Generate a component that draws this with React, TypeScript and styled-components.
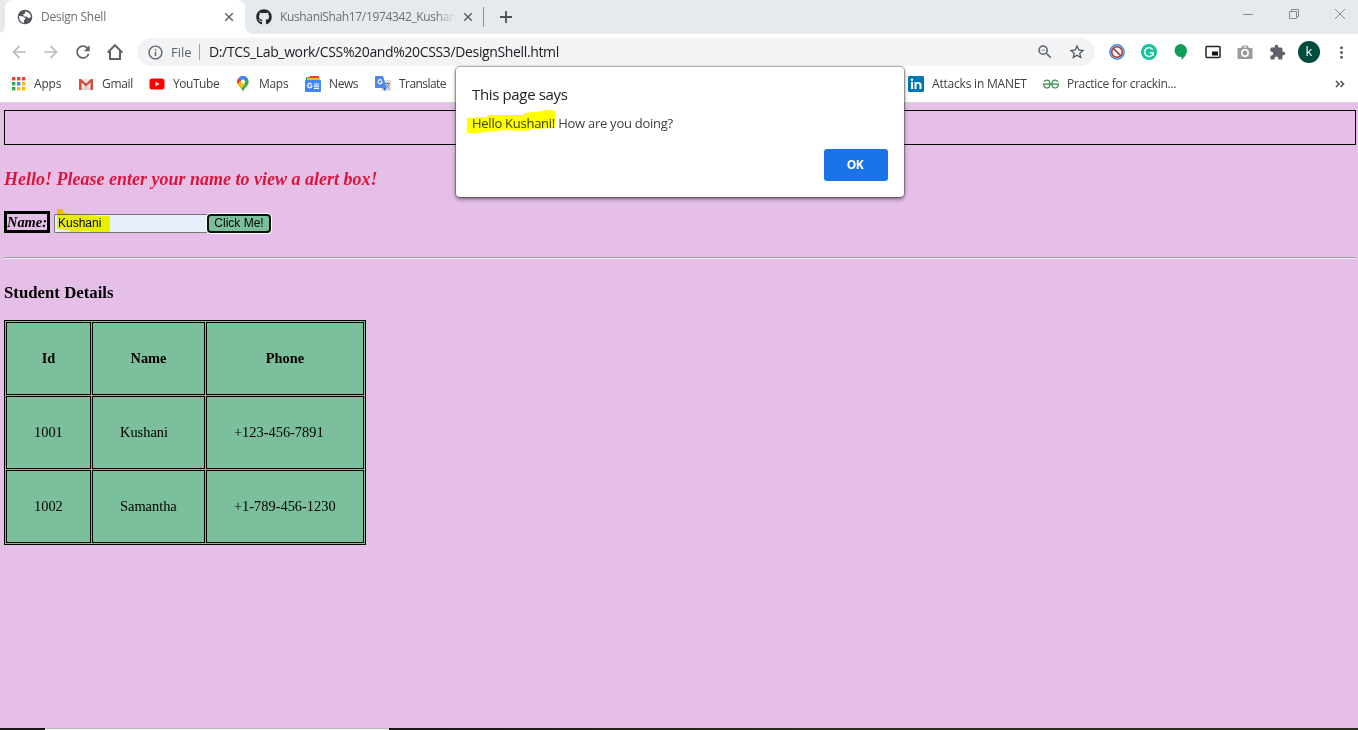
import React from 'react';
import styled, { createGlobalStyle } from 'styled-components';
import {
  MdArrowBack, MdArrowForward, MdRefresh, MdInfoOutline, MdStarBorder,
  MdExtension, MdMoreVert, MdOutlineZoomOut,
} from 'react-icons/md';
import { FaGithub } from 'react-icons/fa';

const Global = createGlobalStyle`
  * { box-sizing: border-box; }
  body { margin: 0; overflow: hidden; font-family: "Open Sans", "Noto Sans", sans-serif; }
  svg { display: block; flex: none; }
`;

const Window = styled.div`
  position: relative;
  display: flex;
  flex-direction: column;
  width: 1358px;
  height: 730px;
  overflow: hidden;
  background: #fff;
`;

const Label = styled.span<{ $ls?: number; $size?: number; $color?: string }>`
  display: block;
  font-size: ${p => p.$size ?? 12}px;
  letter-spacing: ${p => p.$ls ?? 0}px;
  color: ${p => p.$color ?? '#3c4043'};
  white-space: pre;
  line-height: 20px;
`;

const TabStrip = styled.div`
  display: flex;
  height: 34px;
  flex: none;
  padding-left: 5px;
  background: #e6eaed;
`;

const ActiveTab = styled.div`
  position: relative;
  display: flex;
  align-items: center;
  width: 240px;
  height: 34px;
  padding: 0 11px 0 12px;
  background: #fff;
  border-radius: 8px 8px 0 0;
  &::before, &::after {
    content: '';
    position: absolute;
    bottom: 0;
    width: 8px;
    height: 8px;
  }
  &::before { left: -8px; background: radial-gradient(circle at 0 0, transparent 7.5px, #fff 8px); }
  &::after { right: -8px; background: radial-gradient(circle at 100% 0, transparent 7.5px, #fff 8px); }
`;

const Tab = styled.div`
  display: flex;
  align-items: center;
  width: 238px;
  padding: 0 10px 0 11px;
`;

const TabTitle = styled.div<{ $fade?: boolean }>`
  flex: 1;
  margin: 0 7px 0 8px;
  min-width: 0;
  ${p => p.$fade && 'mask-image: linear-gradient(90deg, #000 88%, transparent);'}
`;

const Divider = styled.div<{ $h: number; $color: string }>`
  width: 1px;
  height: ${p => p.$h}px;
  align-self: center;
  background: ${p => p.$color};
`;

const NewTab = styled.div`
  display: flex;
  align-items: center;
  margin-left: 16px;
`;

const WindowControls = styled.div`
  display: flex;
  align-items: center;
  gap: 34px;
  height: 28px;
  margin-left: auto;
  padding-right: 12px;
`;

const Toolbar = styled.div`
  display: flex;
  align-items: center;
  flex: none;
  height: 36px;
  padding-right: 1px;
`;

const Slot = styled.div`
  display: flex;
  align-items: center;
  justify-content: center;
  width: 32px;
  height: 32px;
  flex: none;
`;

const NavButtons = styled.div`
  display: flex;
  width: 137px;
  padding-left: 3px;
`;

const Omnibox = styled.div`
  display: flex;
  align-items: center;
  width: 958px;
  height: 28px;
  padding-left: 10px;
  border-radius: 14px;
  background: #f1f3f4;
`;

const Scheme = styled.div`
  width: 28px;
  margin-left: 7px;
`;

const Address = styled.div`
  flex: 1;
  margin-left: 9px;
`;

const OmniIcons = styled.div`
  display: flex;
  padding-right: 2px;
`;

const Extensions = styled.div`
  display: flex;
  padding-left: 6px;
`;

const Avatar = styled.div`
  width: 22px;
  height: 22px;
  border-radius: 50%;
  background: #004d40;
  color: #fff;
  font-size: 13px;
  line-height: 21px;
  text-align: center;
`;

const Bookmarks = styled.div`
  display: flex;
  flex: none;
  height: 33px;
  padding: 0 13px 5px 10px;
  border-bottom: 1px solid #d5d7da;
`;

const Bookmark = styled.div<{ $w: number }>`
  display: flex;
  align-items: center;
  gap: 8px;
  width: ${p => p.$w}px;
`;

const Overflow = styled.div`
  display: flex;
  align-items: center;
  margin-left: auto;
`;

const Page = styled.main`
  flex: 1;
  padding: 7px 2px 0 4px;
  background: #e5bfe7;
  font-family: "Liberation Serif", "Times New Roman", serif;
  color: #000;
`;

const Banner = styled.div`
  height: 35px;
  border: 1px solid #000;
`;

const Prompt = styled.h3`
  margin: 24px 0 0;
  font-size: 18px;
  line-height: 20px;
  font-style: italic;
  color: #dc143c;
`;

const FormRow = styled.form`
  display: flex;
  align-items: flex-start;
  height: 22px;
  margin-top: 22px;
`;

const NameLabel = styled.label`
  width: 46px;
  height: 22px;
  border: 3px solid #000;
  font-size: 14.4px;
  line-height: 16px;
  font-weight: bold;
  font-style: italic;
  text-align: center;
`;

const NameInput = styled.div`
  width: 153px;
  height: 19px;
  margin: 3px 0 0 4px;
  padding-left: 3px;
  border: 1px solid #767676;
  border-right: 0;
  border-radius: 2px 0 0 2px;
  background: #e8f0fe;
  font: 12px/17px "Liberation Sans", Arial, sans-serif;
`;

const ClickButton = styled.button`
  width: 64px;
  height: 19px;
  margin: 3px 0 0;
  padding: 0;
  border: 2px solid #101010;
  border-radius: 4px;
  box-shadow: 0 0 0 1px #fff;
  background: #7bbf9c;
  color: #000;
  font: 12px/15px "Liberation Sans", Arial, sans-serif;
  white-space: nowrap;
`;

const Rule = styled.hr`
  height: 2px;
  margin: 24px 0 0;
  border: 0;
  border-top: 1px solid #9a9a9a;
  border-bottom: 1px solid #eee;
`;

const SectionTitle = styled.h3`
  margin: 24px 0 0;
  font-size: 16.8px;
  line-height: 20px;
`;

const Table = styled.table`
  width: 362px;
  height: 225px;
  margin-top: 17px;
  border: 1px solid #000;
  border-spacing: 1px;
  border-collapse: separate;
  table-layout: fixed;
  background: #7bbf9c;
  font-size: 14.4px;
`;

const Cell = styled.td<{ $w: number }>`
  width: ${p => p.$w}px;
  height: 73px;
  padding: 0 0 0 27px;
  border: 1px solid #000;
`;

const HeadCell = styled(Cell).attrs({ as: 'th' })`
  padding: 0;
`;

const Taskbar = styled.div`
  display: flex;
  flex: none;
  height: 2px;
  background: linear-gradient(90deg, #1c1617 30%, #2b2d1c 60%);
`;

const TaskSearch = styled.div`
  width: 344px;
  margin-left: 45px;
  border-top: 1px solid #bdb9b9;
  background: #f3f1f0;
`;

const Dialog = styled.div`
  position: absolute;
  left: 456px;
  top: 67px;
  display: flex;
  flex-direction: column;
  width: 448px;
  height: 130px;
  padding: 17px 16px 16px;
  border-radius: 4px;
  background: #fff;
  box-shadow: 0 0 1px 1px rgba(0, 0, 0, 0.3), 0 2px 4px rgba(0, 0, 0, 0.5);
`;

const DialogText = styled.div`
  position: relative;
  height: 20px;
  margin-top: 9px;
`;

const OkButton = styled.button`
  width: 64px;
  height: 32px;
  margin: auto 0 0 auto;
  padding: 0 2px 0 0;
  border: 0;
  border-radius: 3px;
  background: #1a73e8;
  color: #fff;
  font: 700 12px/32px "Open Sans", sans-serif;
  letter-spacing: -0.4px;
`;

const Marker = styled.svg<{ $x: number; $y: number }>`
  position: absolute;
  left: ${p => p.$x}px;
  top: ${p => p.$y}px;
  mix-blend-mode: multiply;
  pointer-events: none;
`;

const GlobeIcon = () => (
  <svg width="16" height="16" viewBox="0 0 16 16">
    <circle cx="8" cy="8" r="7.300" fill="#53575c" />
    <path d="M8.500 2L13 4.800 14 8l-2.500 1.200-2-1.700H7.200L6 5.500l2-1zM2 7l4.500.6L8.500 9.800 7 11.300V14C4 13.500 2 11 2 7z" fill="#fff" />
  </svg>
);

const CloseIcon = () => (
  <svg width="10" height="10" viewBox="0 0 10 10" stroke="#5f6368" strokeWidth="1.5">
    <path d="M1.200 1.200l7.600 7.600M8.800 1.200l-7.600 7.600" />
  </svg>
);

const HomeIcon = () => (
  <svg width="18" height="18" viewBox="0 0 18 18" fill="none" stroke="#5f6368" strokeWidth="2">
    <path d="M1.6 9.6L9 2.2l7.400 7.400M4 8v8h10V8" />
  </svg>
);

const AppsIcon = () => (
  <svg width="16" height="16" viewBox="0 0 16 16">
    {['#ea4335', '#ea4335', '#ea4335', '#34a853', '#4285f4', '#fbbc05', '#34a853', '#fbbc05', '#fbbc05'].map((c, i) => (
      <rect key={i} x={2 + (i % 3) * 5} y={1 + Math.floor(i / 3) * 5} width="3.400" height="3.400" fill={c} />
    ))}
  </svg>
);

const GmailIcon = () => (
  <svg width="16" height="16" viewBox="0 0 16 16">
    <path d="M1 3h14v11H1z" fill="#eceaea" />
    <path d="M2 14l6-5 6 5z" fill="#d6d4d4" />
    <path d="M1 3h2l5 4.500L13 3h2v11h-2.500V6.500L8 10.500 3.500 6.500V14H1z" fill="#d54b3d" />
  </svg>
);

const YouTubeIcon = () => (
  <svg width="16" height="16" viewBox="0 0 16 16">
    <rect x="0.500" y="2.500" width="15" height="11" rx="2.800" fill="#f00" />
    <path d="M6.500 5.700v4.600l4-2.300z" fill="#fff" />
  </svg>
);

const MapsIcon = () => (
  <svg width="16" height="16" viewBox="0 0 16 16">
    <defs>
      <clipPath id="pin"><path d="M8 0a5.700 5.700 0 0 0-5.700 5.700C2.300 10 6.800 11 8 16c1.200-5 5.700-6 5.700-10.300A5.700 5.700 0 0 0 8 0z" /></clipPath>
    </defs>
    <g clipPath="url(#pin)">
      <path d="M0 0h16v16H0z" fill="#34a853" />
      <path d="M2 9L14 -4H0v14z" fill="#4285f4" />
      <path d="M0 0l8 5.700-3.500 4L0 6z" fill="#ea4335" />
      <path d="M5 0h11L8 5.700z" fill="#4285f4" />
      <path d="M2 9l3.500-4 5 3L6 13z" fill="#fbbc04" />
    </g>
    <circle cx="8" cy="5.700" r="2.100" fill="#fff" />
  </svg>
);

const NewsIcon = () => (
  <svg width="16" height="16" viewBox="0 0 16 16">
    <path d="M1 1.500L10 0v6H1z" fill="#34a853" />
    <path d="M5 0h9v6H4z" fill="#ea4335" />
    <path d="M2 2h13v4H2z" fill="#fbbc04" />
    <rect y="4" width="16" height="12" rx="1" fill="#4285f4" />
    <path d="M6.700 8.400A2.200 2.200 0 1 0 7 10H5M9 8h5M9 10.200h5M9 12.400h5" fill="none" stroke="#fff" strokeWidth="1.200" />
  </svg>
);

const TranslateIcon = () => (
  <svg width="16" height="16" viewBox="0 0 16 16">
    <rect x="6" y="4" width="10" height="11" rx="1" fill="#dadce0" />
    <path d="M10 7.500h5M12.500 6.500v1M14 7.800c-.5 2-2 3.500-3.500 4.500M11.500 9c.5 1.500 2 3 3 3.500" fill="none" stroke="#6f777d" />
    <path d="M1 0h7l3.500 12H1a1 1 0 0 1-1-1V1a1 1 0 0 1 1-1z" fill="#4a86ee" />
    <path d="M8 12h3.500L9.500 15z" fill="#3367d6" />
    <path d="M6.800 4.500A2.100 2.100 0 1 0 7.200 6H5.200" fill="none" stroke="#fff" strokeWidth="1.100" />
  </svg>
);

const LinkedInIcon = () => (
  <svg width="16" height="16" viewBox="0 0 16 16">
    <rect width="16" height="16" rx="1.200" fill="#0077b5" />
    <path d="M3 6h2v7H3zM6.500 6h2v1c1-1.600 5-1.700 5 2v4h-2V9.500c0-2.300-3-2.200-3 0V13h-2z" fill="#fff" />
    <circle cx="4" cy="3.800" r="1.200" fill="#fff" />
  </svg>
);

const GeeksIcon = () => (
  <svg width="16" height="16" viewBox="0 0 16 16" fill="none" stroke="#2f8d46" strokeWidth="1.200">
    <path d="M0 8.200h16M1.200 5.800C1.800 4.600 2.800 4.200 4 4.200c2 0 3 1.500 3 3.900s-1 3.900-3 3.900-3.200-1.300-3.200-3.800" />
    <path d="M14.800 5.800c-.6-1.200-1.600-1.600-2.800-1.600-2 0-3 1.500-3 3.900s1 3.900 3 3.900 3.200-1.300 3.200-3.800" />
  </svg>
);

const BlockedIcon = () => (
  <svg width="16" height="16" viewBox="0 0 16 16" fill="none">
    <circle cx="8" cy="8" r="7.200" fill="#d7e4f5" stroke="#4b8fe0" strokeWidth="1.500" />
    <circle cx="8" cy="8" r="5.300" fill="#f2f2f2" stroke="#a3322d" strokeWidth="1.500" />
    <path d="M4.500 4.500l7 7" stroke="#a3322d" strokeWidth="1.600" />
  </svg>
);

const GrammarIcon = () => (
  <svg width="16" height="16" viewBox="0 0 16 16" fill="none">
    <circle cx="8" cy="8" r="8" fill="#15c39a" />
    <path d="M11.700 5.600A4.400 4.400 0 1 0 12 10M8.700 8.800h3.500v2.600" stroke="#fff" strokeWidth="1.400" />
  </svg>
);

const BalloonIcon = () => (
  <svg width="16" height="16" viewBox="0 0 16 16">
    <path d="M7.500 0A6.500 6.500 0 0 1 14 6.500c0 4-3 7-5.500 9.500v-3A6.500 6.500 0 1 1 7.500 0z" fill="#0f9d58" />
  </svg>
);

const PipIcon = () => (
  <svg width="16" height="16" viewBox="0 0 16 16">
    <rect x="1" y="2.500" width="14" height="11" rx="1" fill="#fff" stroke="#202124" strokeWidth="1.500" />
    <path d="M7 7.500h6v4H7z" fill="#111" />
  </svg>
);

const CameraIcon = () => (
  <svg width="16" height="16" viewBox="0 0 16 16">
    <path d="M1.500 4H4l1.500-2.500h5L12 4h2.500a1 1 0 0 1 1 1v9a1 1 0 0 1-1 1h-13a1 1 0 0 1-1-1V5a1 1 0 0 1 1-1z" fill="#9b9b9b" />
    <circle cx="8" cy="9" r="3.200" fill="#9b9b9b" stroke="#fff" strokeWidth="1.600" />
    <path d="M6.500 3h3" stroke="#fff" />
  </svg>
);

const bookmarks: { name: string; w: number; ls: number; icon: React.ReactNode }[] = [
  { name: 'Apps', w: 68, ls: -0.2, icon: <AppsIcon /> },
  { name: 'Gmail', w: 71, ls: -0.3, icon: <GmailIcon /> },
  { name: 'YouTube', w: 86, ls: -0.45, icon: <YouTubeIcon /> },
  { name: 'Maps', w: 70, ls: -0.3, icon: <MapsIcon /> },
  { name: 'News', w: 70, ls: -0.4, icon: <NewsIcon /> },
  { name: 'Translate', w: 533, ls: -0.55, icon: <TranslateIcon /> },
  { name: 'Attacks in MANET', w: 135, ls: -0.2, icon: <LinkedInIcon /> },
  { name: 'Practice for crackin...', w: 150, ls: -0.3, icon: <GeeksIcon /> },
];

const students = [
  ['1001', 'Kushani', '+123-456-7891'],
  ['1002', 'Samantha', '+1-789-456-1230'],
];
const widths = [85, 113, 158];

export default function App() {
  return (
    <Window>
      <Global />
      <TabStrip>
        <ActiveTab>
          <GlobeIcon />
          <TabTitle><Label $ls={-0.25} $color="#6b6e72">Design Shell</Label></TabTitle>
          <CloseIcon />
        </ActiveTab>
        <Tab>
          <FaGithub size={16} color="#24292e" />
          <TabTitle $fade><Label $ls={-0.36} $color="#6b6e72">KushaniShah17/1974342_Kushani</Label></TabTitle>
          <CloseIcon />
        </Tab>
        <Divider $h={20} $color="#8d9195" />
        <NewTab>
          <svg width="12" height="12" viewBox="0 0 12 12" stroke="#4f5357" strokeWidth="1.800">
            <path d="M6 0v12M0 6h12" />
          </svg>
        </NewTab>
        <WindowControls>
          <svg width="12" height="12" viewBox="0 0 12 12" stroke="#888"><path d="M1 6.500h10" /></svg>
          <svg width="12" height="12" viewBox="0 0 12 12" stroke="#888" fill="none">
            <path d="M1.500 3.500h7v7h-7zM3.500 3V1.500h7v7H9" />
          </svg>
          <svg width="12" height="12" viewBox="0 0 12 12" stroke="#888"><path d="M1 1l10 10M11 1L1 11" /></svg>
        </WindowControls>
      </TabStrip>

      <Toolbar>
        <NavButtons>
          <Slot><MdArrowBack size={20} color="#babcbe" /></Slot>
          <Slot><MdArrowForward size={20} color="#babcbe" /></Slot>
          <Slot><MdRefresh size={20} color="#5f6368" /></Slot>
          <Slot><HomeIcon /></Slot>
        </NavButtons>
        <Omnibox>
          <MdInfoOutline size={17} color="#5f6368" />
          <Scheme><Label $size={13} $color="#5f6368">File</Label></Scheme>
          <Divider $h={16} $color="#9aa0a6" />
          <Address><Label $size={14} $ls={-0.36} $color="#202124">D:/TCS_Lab_work/CSS%20and%20CSS3/DesignShell.html</Label></Address>
          <OmniIcons>
            <Slot><MdOutlineZoomOut size={18} color="#5f6368" /></Slot>
            <Slot><MdStarBorder size={18} color="#4d5156" /></Slot>
          </OmniIcons>
        </Omnibox>
        <Extensions>
          <Slot><BlockedIcon /></Slot>
          <Slot><GrammarIcon /></Slot>
          <Slot><BalloonIcon /></Slot>
          <Slot><PipIcon /></Slot>
          <Slot><CameraIcon /></Slot>
          <Slot><MdExtension size={17} color="#5f6368" /></Slot>
          <Slot><Avatar>k</Avatar></Slot>
          <Slot><MdMoreVert size={19} color="#5f6368" /></Slot>
        </Extensions>
      </Toolbar>

      <Bookmarks>
        {bookmarks.map(b => (
          <Bookmark key={b.name} $w={b.w}>
            {b.icon}
            <Label $ls={b.ls}>{b.name}</Label>
          </Bookmark>
        ))}
        <Overflow>
          <svg width="10" height="8" viewBox="0 0 10 8" fill="none" stroke="#54585c" strokeWidth="1.700">
            <path d="M1 1l3 3-3 3M5.500 1l3 3-3 3" />
          </svg>
        </Overflow>
      </Bookmarks>

      <Page>
        <Banner />
        <Prompt>Hello! Please enter your name to view a alert box!</Prompt>
        <FormRow>
          <NameLabel>Name:</NameLabel>
          <NameInput>Kushani</NameInput>
          <ClickButton type="button">Click Me!</ClickButton>
        </FormRow>
        <Rule />
        <SectionTitle>Student Details</SectionTitle>
        <Table>
          <tbody>
            <tr>
              {['Id', 'Name', 'Phone'].map((h, i) => <HeadCell key={h} $w={widths[i]}>{h}</HeadCell>)}
            </tr>
            {students.map(row => (
              <tr key={row[0]}>
                {row.map((v, i) => <Cell key={v} $w={widths[i]}>{v}</Cell>)}
              </tr>
            ))}
          </tbody>
        </Table>
      </Page>
      <Taskbar><TaskSearch /></Taskbar>

      <Marker $x={57} $y={209} width="53" height="24" viewBox="0 0 53 24">
        <path d="M0 0h6v4l13 2h19v1h15v16H33v-1h-9v1H13v-2H6v-1H0z" fill="#ff0" />
      </Marker>

      <Dialog>
        <Label $size={15} $ls={-0.35} $color="#202124">This page says</Label>
        <DialogText>
          <Label $size={13} $ls={-0.26} $color="#3c4043">Hello Kushani! How are you doing?</Label>
          <Marker $x={-5} $y={-3} width="89" height="24" viewBox="0 0 89 24">
            <path d="M0 8l20-1 1-2h36V3l20-2V0h9v1h2v17l-25 1v2l-31-1v1l-17 1v1H0z" fill="#ff0" />
          </Marker>
        </DialogText>
        <OkButton type="button">OK</OkButton>
      </Dialog>
    </Window>
  );
}
